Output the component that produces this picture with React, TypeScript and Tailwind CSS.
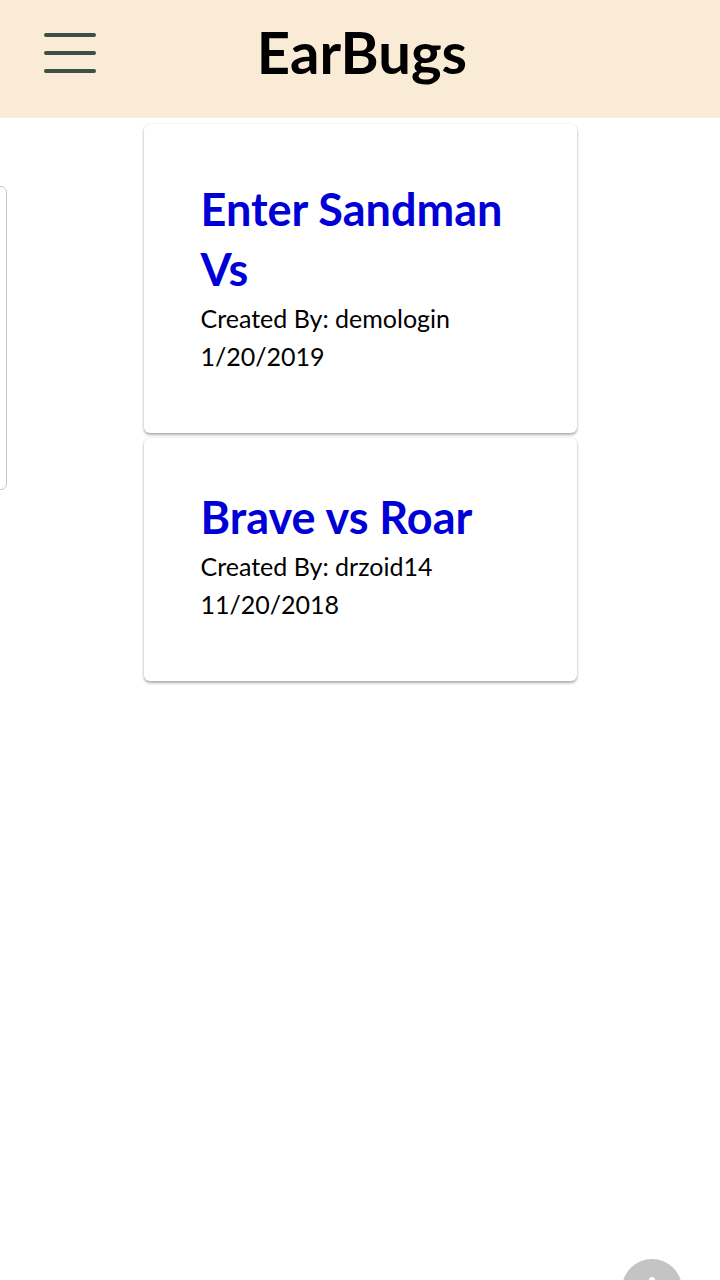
import React from "react";

const cards = [
  { title: "Enter Sandman Vs", by: "demologin", date: "1/20/2019", pt: "pt-[55px]" },
  { title: "Brave vs Roar", by: "drzoid14", date: "11/20/2018", pt: "pt-[49px]" },
];

export default function App() {
  return (
    <div className="relative w-[720px] h-[1280px] overflow-hidden bg-white" style={{ fontFamily: "Lato, 'Open Sans', sans-serif" }}>
      <header className="h-[118px] bg-[#faebd7] flex items-center relative">
        <button className="absolute left-[44px] top-[33px] flex flex-col gap-[14px]">
          <span className="block w-[52px] h-[4px] rounded-full bg-[#3d4f47]" />
          <span className="block w-[52px] h-[4px] rounded-full bg-[#3d4f47]" />
          <span className="block w-[52px] h-[4px] rounded-full bg-[#3d4f47]" />
        </button>
        <h1 className="w-full text-center text-[58px] font-bold text-black leading-none pb-[14px] pl-[4px]">EarBugs</h1>
      </header>

      <div className="absolute left-[-6px] top-[186px] w-[13px] h-[304px] border border-[#c8c8c8] rounded-[6px] bg-white" />

      <main className="flex flex-col items-center pt-[6px] gap-[5px]">
        {cards.map((c) => (
          <div key={c.title} className={`w-[433px] bg-white rounded-[6px] shadow-[0_2px_3px_rgba(0,0,0,0.32),0_0_2px_rgba(0,0,0,0.08)] pl-[57px] pr-[50px] pb-[58px] ${c.pt}`}>
            <div className="text-[#0000d6] font-bold text-[45px] leading-[60px]">{c.title}</div>
            <div className="text-black text-[25px] leading-[38px]">Created By: {c.by}</div>
            <div className="text-black text-[25px] leading-[38px]">{c.date}</div>
          </div>
        ))}
      </main>

      <div className="absolute left-[622px] top-[1259px] w-[60px] h-[60px] rounded-full bg-[#c4c4c4] flex justify-center">
        <span className="block w-[6px] h-[30px] bg-white rounded-full mt-[18px]" />
      </div>
    </div>
  );
}
